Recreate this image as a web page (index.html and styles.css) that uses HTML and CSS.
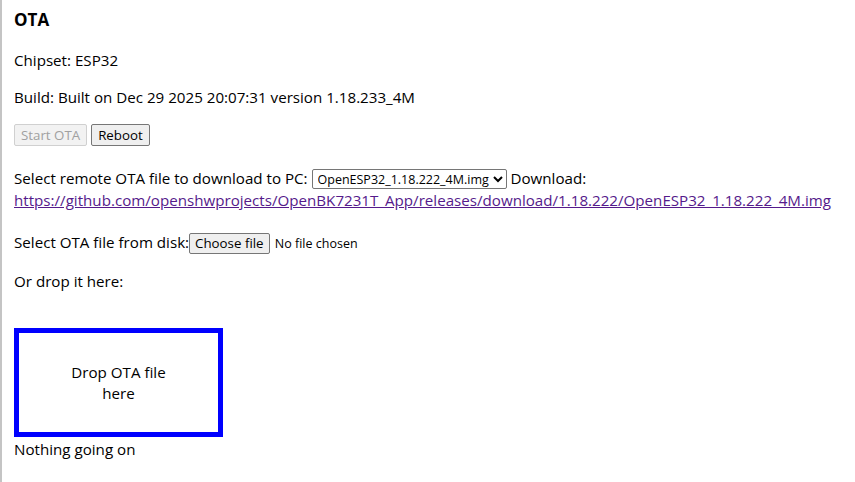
FILE: index.html
```html
<html>
<head>
<title>OTA</title>
<link rel="stylesheet" href="styles.css">
</head>
<body>

<h3>OTA</h3>
<p>Chipset: ESP32</p>
<p>Build: Built on Dec 29 2025 20:07:31 version 1.18.233_4M</p>

<div class="buttons">
    <button disabled>Start OTA</button>
    <button>Reboot</button>
</div>

<p class="remote">Select remote OTA file to download to PC: <select>
    <option>OpenESP32_1.18.222_4M.img</option>
</select> Download:<br>
<a href="#" class="visited">https://github.com/openshwprojects/OpenBK7231T_App/releases/download/1.18.222/OpenESP32_1.18.222_4M.img</a></p>

<p class="disk">Select OTA file from disk:<span class="file"><button>Choose file</button> No file chosen</span></p>

<p class="drop-label">Or drop it here:</p>
<div class="spacer"></div>

<div id="drop-area">
    <div class="drop-text">Drop OTA file here</div>
</div>
<div id="status">Nothing going on</div>

</body>
</html>
```

FILE: styles.css
```css
html { border-left: 2px solid #c4c4c4; min-height: 100%; box-sizing: border-box; }
body { margin: 0; padding: 7px 12px; font-family: "Open Sans", sans-serif; font-size: 15.15px; line-height: 21px; color: #000; background: #fff; }
h3 { font-size: 17px; margin: 0 0 18px 0; line-height: 25px; }
p { margin: 16px 0; }
.buttons { margin: 16px 0; display: flex; gap: 4px; }
button { font-family: "Open Sans", sans-serif; font-size: 13.3px; line-height: 18px; padding: 1px 6px; background: #efefef; border: 1px solid #767676; border-radius: 2px; color: #000; }
button:disabled { color: #a0a0a0; border-color: #d0d0d0; background: #f2f2f2; }
select { font-family: "Open Sans", sans-serif; font-size: 12.5px; height: 20px; border: 1px solid #767676; border-radius: 2px; background: #fff; padding: 0 0 0 1px; }
.remote { margin-top: 21px; line-height: 22px; }
a.visited { color: #551a8b; }
.disk { margin-top: 21px; }
.file { font-size: 12.5px; }
.file button { margin-right: 2px; font-size: 13.3px; line-height: 17px; padding: 1px 5px; }
.drop-label { margin-top: 17px; }
.spacer { height: 20px; }
#drop-area { width: 199px; height: 99px; border: 5px solid #0000ff; display: flex; align-items: center; justify-content: center; text-align: center; }
.drop-text { width: 120px; }
#status { margin-top: 2px; }
```
